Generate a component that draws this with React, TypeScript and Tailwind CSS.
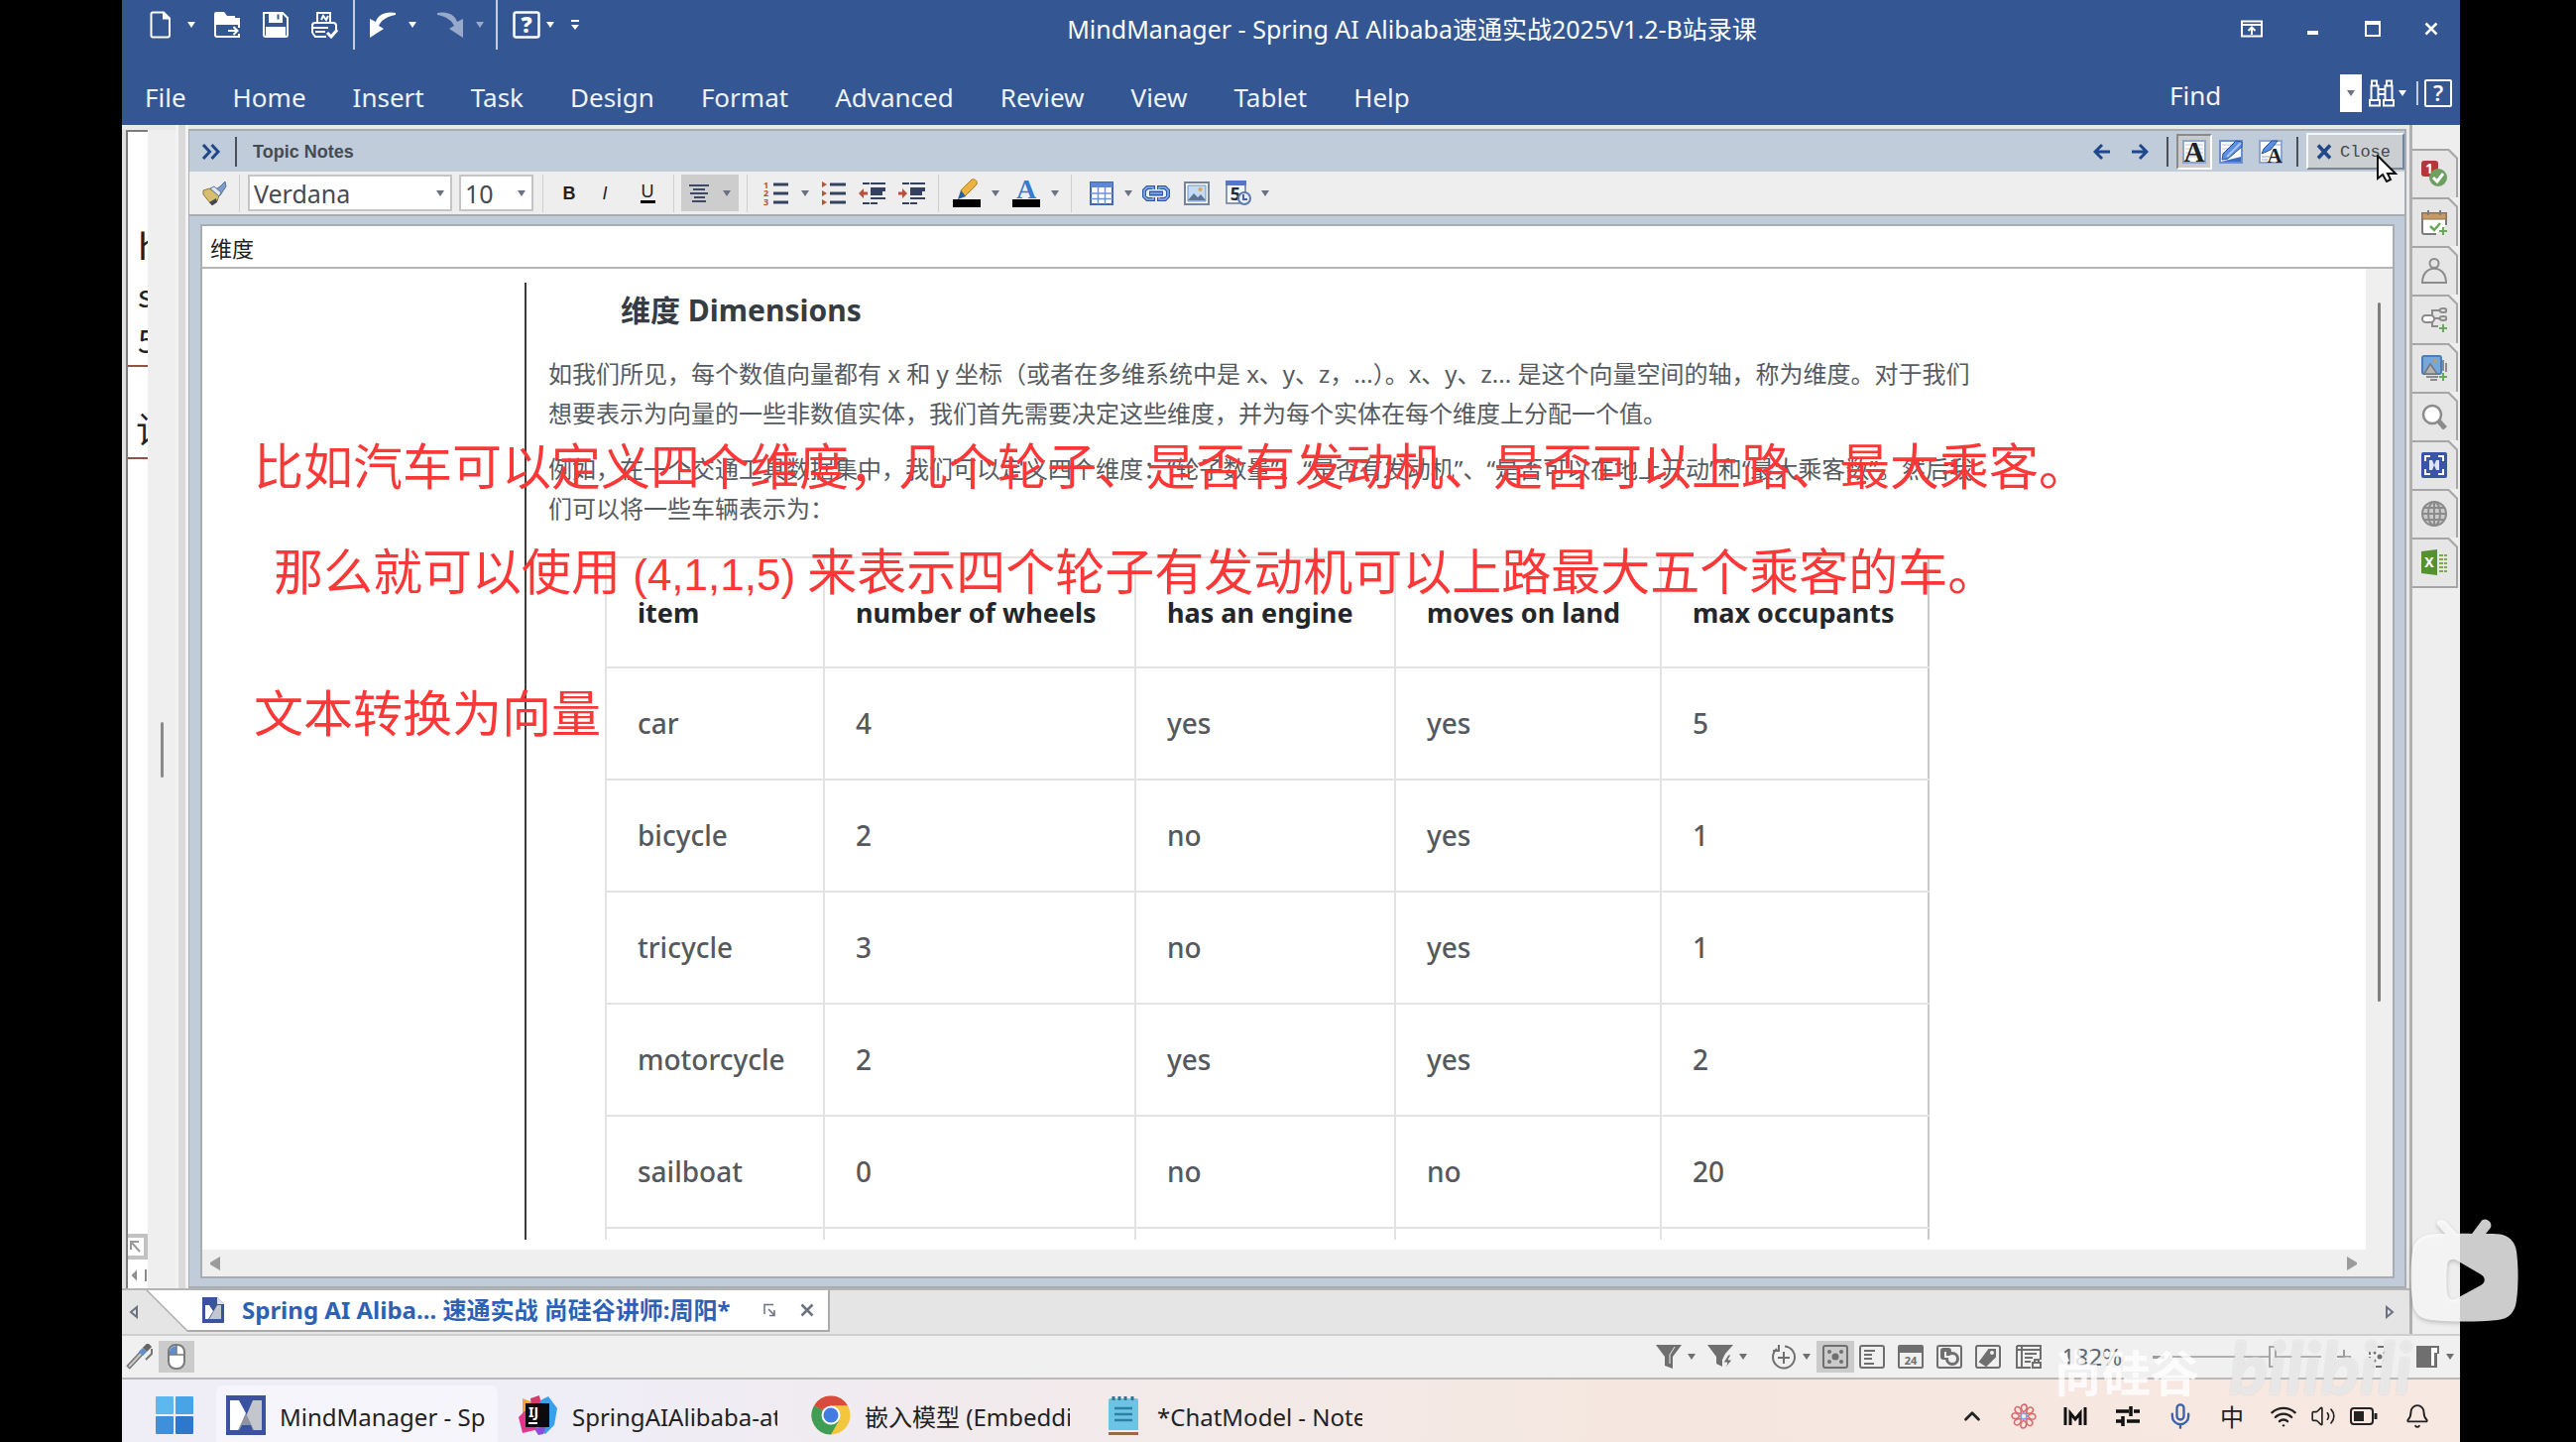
import type { ReactNode } from "react";
import {
  Bell,
  ChevronUp,
  Mic,
  Volume2,
  Wifi,
} from "lucide-react";

const ribbonTabs = [
  "File",
  "Home",
  "Insert",
  "Task",
  "Design",
  "Format",
  "Advanced",
  "Review",
  "View",
  "Tablet",
  "Help",
];

const vehicles = [
  ["car", "4", "yes", "yes", "5"],
  ["bicycle", "2", "no", "yes", "1"],
  ["tricycle", "3", "no", "yes", "1"],
  ["motorcycle", "2", "yes", "yes", "2"],
  ["sailboat", "0", "no", "no", "20"],
  ["", "", "", "", ""],
];

const Caret = ({ className = "" }: { className?: string }) => (
  <svg
    viewBox="0 0 8 6"
    fill="currentColor"
    className={`w-2 h-[6px] shrink-0 ${className}`}
  >
    <path d="M0 0h8L4 6z" />
  </svg>
);

const IconButton = ({
  label,
  className = "",
  children,
}: {
  label: string;
  className?: string;
  children: ReactNode;
}) => (
  <button
    type="button"
    aria-label={label}
    className={`flex items-center justify-center shrink-0 ${className}`}
  >
    {children}
  </button>
);

const QuickAccess = () => (
  <div className="flex items-center h-[50px] pl-7 text-white shrink-0">
    <IconButton label="New">
      <svg viewBox="0 0 22 28" fill="none" stroke="currentColor" strokeWidth="2" className="w-[22px] h-7">
        <path d="M3 1.500h11l6 6v17a2 2 0 0 1-2 2H3a1.500 1.500 0 0 1-1.500-1.500V3A1.500 1.500 0 0 1 3 1.500z" />
        <path d="M14 1.500v6h6" fill="currentColor" />
      </svg>
    </IconButton>
    <Caret className="ml-4" />
    <IconButton label="Open" className="ml-[18px]">
      <svg viewBox="0 0 28 28" className="w-7 h-7">
        <path d="M1 3a2 2 0 0 1 2-2h8l3 4h8v9H1z" fill="currentColor" />
        <path d="M2 12v12a2 2 0 0 0 2 2h22v-3M26 17V8" fill="none" stroke="currentColor" strokeWidth="2" />
        <path d="M13 7h14v7H13z" fill="currentColor" />
        <path d="M15 20h9M20.500 16l4 4-4 4" fill="none" stroke="currentColor" strokeWidth="2" />
      </svg>
    </IconButton>
    <IconButton label="Save" className="ml-[21px]">
      <svg viewBox="0 0 28 28" className="w-7 h-7" fill="none" stroke="currentColor" strokeWidth="2">
        <path d="M2 2h19l5 5v17a2 2 0 0 1-2 2H4a2 2 0 0 1-2-2z" />
        <path d="M8 2h12v9H8z" fill="currentColor" />
        <path d="M15.500 3.500h2v5h-2z" fill="#345793" stroke="none" />
        <path d="M5 17h18v8H5z" fill="currentColor" />
      </svg>
    </IconButton>
    <IconButton label="Print" className="ml-[21px]">
      <svg viewBox="0 0 28 28" className="w-7 h-7" fill="none" stroke="currentColor" strokeWidth="2">
        <path d="M7 12V2h13v10M11 9l2-4 3 4 2-4" />
        <path d="M4 12h19a3 3 0 0 1 3 3v4M2 22v-7a3 3 0 0 1 2-3M2 17h16M5 21h10M4 26h12M2 22l3 4" />
        <path d="M17 22l4 4 6-7" strokeWidth="3" />
      </svg>
    </IconButton>
    <span className="w-[2px] h-full ml-[15px] bg-[#c3cde0]" />
    <IconButton label="Undo" className="ml-[14px]">
      <svg viewBox="0 0 28 28" className="w-7 h-7" fill="currentColor">
        <path d="M27 2c-10-2-18 2-20 9L1 8v19l14-9-5-3c2-5 7-9 17-11z" />
      </svg>
    </IconButton>
    <Caret className="ml-3" />
    <IconButton label="Redo" className="ml-5 text-[#98aacb]">
      <svg viewBox="0 0 28 28" className="w-7 h-7" fill="currentColor">
        <path d="M1 2c10-2 18 2 20 9l6-3v19l-14-9 5-3C16 10 11 6 1 4z" />
      </svg>
    </IconButton>
    <Caret className="ml-3 text-[#98aacb]" />
    <span className="w-[2px] h-full ml-3 bg-[#c3cde0]" />
    <IconButton label="Help" className="ml-[15px]">
      <svg viewBox="0 0 28 28" className="w-7 h-7">
        <rect x="1.500" y="1.500" width="25" height="25" rx="2" strokeWidth="2.500" fill="none" stroke="currentColor" />
        <text x="14" y="22" textAnchor="middle" fontSize="22" fontWeight="900" fill="currentColor">?</text>
      </svg>
    </IconButton>
    <Caret className="ml-[6px]" />
    <IconButton label="Customize" className="ml-4">
      <svg viewBox="0 0 10 12" className="w-[10px] h-3" fill="currentColor">
        <path d="M1 1h8v2H1zM1 6h8l-4 5z" />
      </svg>
    </IconButton>
  </div>
);

const WindowButtons = () => (
  <div className="flex items-center h-[58px] text-white shrink-0">
    <IconButton label="Ribbon display" className="w-[60px]">
      <svg viewBox="0 0 22 18" className="w-[22px] h-[18px]" fill="none" stroke="currentColor" strokeWidth="2">
        <path d="M1 1.500h20v15H1zM1 5h20M11 15V8M7.500 11L11 7.500l3.500 3.500" />
      </svg>
    </IconButton>
    <IconButton label="Minimize" className="w-[62px] pt-2">
      <span className="w-[11px] h-1 bg-white" />
    </IconButton>
    <IconButton label="Maximize" className="w-[60px]">
      <span className="w-4 h-4 border-2 border-t-4 border-white" />
    </IconButton>
    <IconButton label="Close window" className="w-[58px]">
      <svg viewBox="0 0 14 14" className="w-[14px] h-[14px]" fill="none" stroke="currentColor" strokeWidth="2.500">
        <path d="M1.500 1.500l11 11M12.500 1.500l-11 11" />
      </svg>
    </IconButton>
  </div>
);

const Ribbon = () => (
  <header className="bg-[#345793] text-white shrink-0">
    <div className="flex h-14">
      <QuickAccess />
      <h1 className="flex-1 pl-[22px] text-center text-[25px] leading-[58px] whitespace-nowrap">
        MindManager - Spring AI Alibaba速通实战2025V1.2-B站录课
      </h1>
      <WindowButtons />
    </div>
    <div className="flex h-[70px] pt-[14px]">
      <nav className="flex items-center gap-[47px] h-14 pl-[23px]">
        {ribbonTabs.map((tab) => (
          <button key={tab} type="button" className="text-[26px] leading-9 text-[#eef2f9]">
            {tab}
          </button>
        ))}
      </nav>
      <div className="flex items-center h-12 ml-auto pr-2">
        <input
          aria-label="Find"
          placeholder="Find"
          className="w-[172px] text-[26px] leading-9 pt-1 outline-none placeholder:text-[#eef2f9] bg-transparent"
        />
        <label className="relative flex items-center justify-center w-[22px] h-[38px] bg-white text-gray-500">
          <select aria-label="Recent searches" className="absolute inset-0 appearance-none opacity-0" />
          <Caret />
        </label>
        <IconButton label="Search" className="ml-[7px]">
          <svg viewBox="0 0 26 28" className="w-[26px] h-7" fill="none" stroke="currentColor" strokeWidth="2">
            <path d="M3 1.500h5v5H3zM18 1.500h5v5h-5zM2.500 6.500h7V21h-7zM16.500 6.500h7V21h-7zM1 21h10v5.500H1zM15 21h10v5.500H15zM9.500 10h7v5h-7z" />
          </svg>
        </IconButton>
        <Caret className="ml-1" />
        <span className="w-[2px] h-6 ml-[10px] bg-[#c3cde0]" />
        <IconButton label="Help topics" className="ml-[6px]">
          <svg viewBox="0 0 28 28" className="w-7 h-7">
            <rect x="1" y="1" width="26" height="26" rx="1" strokeWidth="2" fill="none" stroke="currentColor" />
            <text x="14" y="22" textAnchor="middle" fontSize="22" fontWeight="600" fill="currentColor">?</text>
          </svg>
        </IconButton>
      </div>
    </div>
  </header>
);

const NotesHeader = () => (
  <div className="flex items-center h-[41px] bg-[#c0ccd9] text-[#1f478b] shrink-0">
    <IconButton label="Collapse" className="ml-3">
      <svg viewBox="0 0 20 16" className="w-5 h-4" fill="none" stroke="currentColor" strokeWidth="3">
        <path d="M2 1l6.500 7L2 15M10.500 1L17 8l-6.500 7" />
      </svg>
    </IconButton>
    <span className="w-[2px] h-[30px] ml-[14px] bg-[#4a5058]" />
    <h2 className="ml-4 pt-[2px] font-['Liberation_Sans',sans-serif] font-bold text-[18px] text-[#454b52]">
      Topic Notes
    </h2>
    <div className="flex items-center ml-auto">
      <IconButton label="Previous note">
        <svg viewBox="0 0 18 18" className="w-[18px] h-[18px]" fill="none" stroke="currentColor" strokeWidth="3">
          <path d="M17 9H2M9 2L2 9l7 7" />
        </svg>
      </IconButton>
      <IconButton label="Next note" className="ml-5">
        <svg viewBox="0 0 18 18" className="w-[18px] h-[18px]" fill="none" stroke="currentColor" strokeWidth="3">
          <path d="M1 9h15M9 2l7 7-7 7" />
        </svg>
      </IconButton>
      <span className="w-[2px] h-[30px] ml-[18px] bg-[#4a5058]" />
      <IconButton
        label="Text mode"
        className="ml-2 w-9 h-9 border-2 border-t-[#8a8a8a] border-l-[#8a8a8a] border-b-white border-r-white bg-[#c9cbcd]"
      >
        <svg viewBox="0 0 24 24" className="w-6 h-6 font-['Liberation_Serif',serif]">
          <path d="M1 1h22v22H1z" fill="#fff" stroke="#8fa5cf" strokeWidth="2" />
          <path d="M3 5h18M3 9h18M3 13h18M3 17h18" stroke="#b9c7e2" />
          <text x="12" y="22" textAnchor="middle" fontSize="29" fontWeight="700" fill="#1d2126">A</text>
        </svg>
      </IconButton>
      <IconButton label="Ink mode" className="ml-[7px]">
        <svg viewBox="0 0 24 24" className="w-6 h-6">
          <path d="M1 1h22v22H1z" fill="#fff" stroke="#6c8fce" strokeWidth="2" />
          <path d="M3 5h9M3 9h7M3 13h5" stroke="#b9c7e2" />
          <path d="M2 22L22 17v5z" fill="#3c6cc0" />
          <path d="M3 20L4 14 17 1l6 1v5L9 19z" fill="#5b8ede" stroke="#28529c" />
          <path d="M8 17L22 3" stroke="#a8c6f2" strokeWidth="2" />
        </svg>
      </IconButton>
      <IconButton label="Ink and text" className="ml-4">
        <svg viewBox="0 0 24 24" className="w-6 h-6 font-['Liberation_Serif',serif]">
          <path d="M1 1h22v22H1z" fill="#fff" stroke="#8fa5cf" strokeWidth="2" />
          <path d="M3 17h8M3 20h6M16 5h6" stroke="#8ea5cf" />
          <path d="M3 14L5 9l8-8h6l-7 9z" fill="#5b8ede" stroke="#28529c" />
          <text x="16" y="23" textAnchor="middle" fontSize="21" fontWeight="700" fill="#1d2126">A</text>
        </svg>
      </IconButton>
      <span className="w-[2px] h-[30px] ml-[14px] bg-[#4a5058]" />
      <div className="relative ml-2">
        <button
          type="button"
          className="flex items-center w-[99px] h-[37px] pl-2 border-2 border-t-[#f4f6f8] border-l-[#f4f6f8] border-b-[#7d8894] border-r-[#6f86a5] bg-[#cbcfd2]"
        >
          <svg viewBox="0 0 16 16" className="w-4 h-4" fill="none" stroke="currentColor" strokeWidth="3.500">
            <path d="M2 1.500l12 13M14 1.500l-12 13" />
          </svg>
          <span className="ml-2 pt-[2px] font-['Liberation_Mono',monospace] text-[17px] text-[#44494e]">
            Close
          </span>
        </button>
        <svg viewBox="0 0 22 28" className="absolute left-[71px] top-[22px] w-[22px] h-7">
          <path
            d="M1 1v23l5-4 4 7 4-2-3-6h8z"
            fill="#fff"
            stroke="#111"
            strokeWidth="2"
          />
        </svg>
      </div>
    </div>
  </div>
);

const Separator = ({ className = "" }: { className?: string }) => (
  <span className={`w-px h-[38px] shrink-0 bg-[#cfcfcf] ${className}`} />
);

const NotesToolbar = () => (
  <div className="flex items-center h-[45px] border-b-2 border-[#a9adb1] bg-[#eeeeee] text-gray-500 shrink-0">
    <IconButton label="Format painter" className="ml-3">
      <svg viewBox="0 0 26 26" className="w-[26px] h-[26px]">
        <path d="M24 1l1 5-6 9-6-5 6-4z" fill="#7f9cc9" stroke="#5a74a0" />
        <path d="M2 10l6-2 10 7-2 6-5 4-5-6-4-5z" fill="#d8be6c" stroke="#8d7a3f" />
        <path d="M9 8l4-2 7 6-2 4z" fill="#e3e8f0" stroke="#5a74a0" />
        <path d="M8 22l3 3 5-3-1-4z" fill="#3f4854" />
      </svg>
    </IconButton>
    <Separator className="ml-3" />
    <div className="relative flex items-center ml-2 text-gray-500">
      <select
        aria-label="Font"
        className="appearance-none w-[206px] h-[37px] pl-1 border-2 border-[#c3c5c7] bg-white text-[25px] leading-8 text-[#454b52]"
      >
        <option>Verdana</option>
      </select>
      <Caret className="absolute right-2" />
    </div>
    <div className="relative flex items-center ml-[7px]">
      <select
        aria-label="Font size"
        className="appearance-none w-[75px] h-[37px] pl-1 border-2 border-[#c3c5c7] bg-white text-[25px] leading-8 text-[#454b52]"
      >
        <option>10</option>
      </select>
      <Caret className="absolute right-2" />
    </div>
    <Separator className="ml-[9px]" />
    <div className="flex items-center ml-2 font-['Liberation_Sans',sans-serif] text-[18px] leading-5 text-[#222]">
      <button type="button" className="w-9 font-black">B</button>
      <button type="button" className="w-9 italic">I</button>
      <button type="button" className="w-[50px] flex justify-center">
        <span className="border-b-[3px] border-black leading-[18px] px-px">U</span>
      </button>
    </div>
    <Separator className="ml-[1px]" />
    <IconButton label="Alignment" className="ml-[7px] w-[58px] h-[37px] gap-[14px] bg-[#cdcdcd]">
      <svg viewBox="0 0 20 18" className="w-5 h-[18px]" stroke="#3b4a68" strokeWidth="2">
        <path d="M0 1h20M4 5h12M1 9h18M5 13h11M3 17h14" />
      </svg>
      <Caret />
    </IconButton>
    <Separator className="ml-2" />
    <IconButton label="Numbered list" className="ml-4">
      <svg viewBox="0 0 26 24" className="w-[26px] h-6">
        <path d="M10 3h15M10 12h15M10 21h15" stroke="#34425f" strokeWidth="3" />
        <g fontSize="9" fontWeight="700" fill="#b5533a">
          <text x="0" y="7">1</text>
          <text x="0" y="15">2</text>
          <text x="0" y="24">3</text>
        </g>
      </svg>
    </IconButton>
    <Caret className="ml-3" />
    <IconButton label="Bulleted list" className="ml-3">
      <svg viewBox="0 0 26 24" className="w-[26px] h-6" fill="none">
        <path d="M9 3h16M9 12h16M9 21h16" stroke="#34425f" strokeWidth="3" />
        <path d="M1 0l5 3-5 3zM1 9l5 3-5 3zM1 18l5 3-5 3z" fill="#b5533a" />
      </svg>
    </IconButton>
    <IconButton label="Decrease indent" className="ml-3">
      <svg viewBox="0 0 28 24" className="w-7 h-6" fill="none">
        <path d="M4 2h7M12 2h15M4 22h7M12 22h7M12 17h15" stroke="#34425f" strokeWidth="2" />
        <path d="M12 8h15M12 12h12" stroke="#34425f" strokeWidth="4" />
        <path d="M0 12l5-5v3.500h4v3H5V17z" fill="#b5533a" />
      </svg>
    </IconButton>
    <IconButton label="Increase indent" className="ml-3">
      <svg viewBox="0 0 28 24" className="w-7 h-6" fill="none">
        <path d="M4 2h7M12 2h15M4 22h7M12 22h7M12 17h15" stroke="#34425f" strokeWidth="2" />
        <path d="M12 8h15M12 12h12" stroke="#34425f" strokeWidth="4" />
        <path d="M9 12L4 7v3.500H0v3h4V17z" fill="#b5533a" />
      </svg>
    </IconButton>
    <Separator className="ml-3" />
    <IconButton label="Highlight color" className="ml-[13px]">
      <svg viewBox="0 0 30 30" className="w-[30px] h-[30px]">
        <path d="M9 12L20 1c4-1 6 2 5 5L13 18z" fill="#ecb344" stroke="#b17d1c" />
        <path d="M9 12l5 6-8 3z" fill="#2d5d9b" />
        <path d="M1 21h28v8H1z" fill="#000" />
      </svg>
    </IconButton>
    <Caret className="ml-[10px]" />
    <IconButton label="Font color" className="ml-3">
      <svg viewBox="0 0 30 30" className="w-[30px] h-[30px] font-['Liberation_Serif',serif]">
        <text x="15" y="20" textAnchor="middle" fontSize="28" fontWeight="700" fill="#3a7bd0">A</text>
        <path d="M1 21h28v8H1z" fill="#000" />
      </svg>
    </IconButton>
    <Caret className="ml-[10px]" />
    <Separator className="ml-3" />
    <IconButton label="Insert table" className="ml-[18px]">
      <svg viewBox="0 0 24 24" className="w-6 h-6">
        <path d="M1 1h22v22H1z" fill="#fff" stroke="#3f67b4" strokeWidth="2" />
        <path d="M1 1h22v5H1z" fill="#5d88cf" />
        <path d="M1 12h22M1 17.500h22M8.500 6v17M15.500 6v17" stroke="#6f94d4" strokeWidth="1.500" />
      </svg>
    </IconButton>
    <Caret className="ml-[11px]" />
    <IconButton label="Insert link" className="ml-[10px]">
      <svg viewBox="0 0 28 18" className="w-7 h-[18px]" fill="none">
        <path d="M11 5V3H5L2 6v6l3 3h6v-2M17 5V3h6l3 3v6l-3 3h-6v-2" stroke="#2f5aab" strokeWidth="4" />
        <path d="M7 9h14" stroke="#2f5aab" strokeWidth="5" />
        <path d="M8 9h12M11 5V3H5L2 6v6l3 3h6v-2M17 5V3h6l3 3v6l-3 3h-6v-2" stroke="#8fb3ee" strokeWidth="1.500" />
      </svg>
    </IconButton>
    <IconButton label="Insert picture" className="ml-[14px]">
      <svg viewBox="0 0 26 24" className="w-[26px] h-6">
        <path d="M1 1h24v22H1z" fill="#fff" stroke="#76849a" strokeWidth="2" />
        <path d="M4 4h18v16H4z" fill="#c4dbf3" stroke="#6e94c8" />
        <path d="M4 19l6-7 4 4 3-3 5 6z" fill="#5d7595" />
        <circle cx="16.500" cy="8" r="2" fill="#e8a44c" />
      </svg>
    </IconButton>
    <IconButton label="Insert date" className="ml-4">
      <svg viewBox="0 0 26 26" className="w-[26px] h-[26px]">
        <path d="M1 1h19v22H1z" fill="#f3f6fb" stroke="#6a7a94" strokeWidth="1.500" />
        <path d="M0 0h21v5H0z" fill="#5578c2" />
        <text x="10" y="20" textAnchor="middle" fontSize="18" fontWeight="700" fill="#222b38">5</text>
        <circle cx="19" cy="18" r="6" fill="#e5ecf7" stroke="#5e79ab" strokeWidth="2" />
        <path d="M18 14v5h4" fill="none" stroke="#4b659a" strokeWidth="2" />
      </svg>
    </IconButton>
    <Caret className="ml-[10px]" />
  </div>
);

const NoteDocument = () => (
  <div className="flex-1 min-w-0 min-h-0 flex flex-col pt-[14px] pb-[10px] pl-[325px]">
    <article className="flex-1 min-h-0 overflow-hidden border-l-2 border-[#3c3c3c] pl-[22px] text-[#555b61]">
      <h3 className="mt-2 ml-[73px] text-[30px] leading-[40px] font-bold text-[#363c43]">
        维度 Dimensions
      </h3>
      <p className="mt-6 text-[24px] leading-[40px] whitespace-nowrap">
        如我们所见，每个数值向量都有 x 和 y 坐标（或者在多维系统中是 x、y、z，...）。x、y、z... 是这个向量空间的轴，称为维度。对于我们
        <br />
        想要表示为向量的一些非数值实体，我们首先需要决定这些维度，并为每个实体在每个维度上分配一个值。
      </p>
      <p className="mt-4 text-[24px] leading-[40px] whitespace-nowrap">
        例如，在一个交通工具数据集中，我们可以定义四个维度：“轮子数量”、“是否有发动机”、“是否可以在地上开动”和“最大乘客数”。然后我
        <br />
        们可以将一些车辆表示为：
      </p>
      <table className="mt-7 ml-[57px] w-[1334px] table-fixed border-collapse text-left text-[28px] leading-9 text-[#55585c]">
        <colgroup>
          <col className="w-[220px]" />
          <col className="w-[314px]" />
          <col className="w-[262px]" />
          <col className="w-[268px]" />
          <col className="w-[270px]" />
        </colgroup>
        <thead>
          <tr className="h-[111px] text-[#23272c] text-[27px]">
            <th className="pl-[31px] border-2 border-[#e3e3e3] font-bold">item</th>
            <th className="pl-[31px] border-2 border-[#e3e3e3] font-bold">number of wheels</th>
            <th className="pl-[31px] border-2 border-[#e3e3e3] font-bold">has an engine</th>
            <th className="pl-[31px] border-2 border-[#e3e3e3] font-bold">moves on land</th>
            <th className="pl-[31px] border-2 border-[#e3e3e3] border-r-[#c9c9c9] font-bold">max occupants</th>
          </tr>
        </thead>
        <tbody>
          {vehicles.map((row, i) => (
            <tr key={i} className="h-[113px]">
              {row.map((cell, j) => (
                <td
                  key={j}
                  className="pl-[31px] pb-[2px] border-2 border-[#e3e3e3] last:border-r-[#c9c9c9] font-medium"
                >
                  {cell}
                </td>
              ))}
            </tr>
          ))}
        </tbody>
      </table>
    </article>
  </div>
);

/* red captions written over the note */
const Annotations = () => (
  <div className="font-['Noto_Sans_CJK_SC',sans-serif] text-[50px] leading-[60px] text-[#fb3838] whitespace-nowrap">
    <p className="absolute left-[52px] top-[166px]">
      比如汽车可以定义四个维度，几个轮子、是否有发动机、是否可以上路、最大乘客。
    </p>
    <p className="absolute left-[72px] top-[272px]">
      那么就可以使用
      <span className="font-['Liberation_Sans',sans-serif] text-[44px]"> (4,1,1,5) </span>
      来表示四个轮子有发动机可以上路最大五个乘客的车。
    </p>
    <p className="absolute left-[52px] top-[415px]">文本转换为向量</p>
  </div>
);

const TopicNotes = () => (
  <section className="flex-1 min-w-0 min-h-0 flex flex-col mt-1 border-2 border-l border-[#a9adb1] bg-[#c0ccd9]">
    <NotesHeader />
    <NotesToolbar />
    <div className="flex-1 min-h-0 flex flex-col pl-[11px] pr-[10px] pt-2 pb-2">
      <div className="flex-1 min-h-0 flex flex-col border-2 border-[#a9adb1] bg-white">
        <div className="h-[43px] pl-2 border-b-2 border-[#b5b5b5] font-['Noto_Sans_CJK_SC',sans-serif] text-[22px] leading-[43px] text-[#222] shrink-0">
          维度
        </div>
        <div className="relative flex-1 min-h-0 flex">
          <NoteDocument />
          <div className="w-[27px] flex justify-center pt-[34px] bg-[#efefef]">
            <div className="w-[3px] h-[705px] rounded bg-[#7f7f7f]" />
          </div>
          <Annotations />
        </div>
        <div className="flex items-center justify-between h-[27px] pl-2 pr-9 bg-[#efefef] text-[#9b9b9b] shrink-0">
          <svg viewBox="0 0 10 14" className="w-[10px] h-[14px]" fill="currentColor">
            <path d="M10 0v14L0 8V6z" />
          </svg>
          <svg viewBox="0 0 10 14" className="w-[10px] h-[14px]" fill="currentColor">
            <path d="M0 0v14l10-6V6z" />
          </svg>
        </div>
      </div>
    </div>
  </section>
);

const MapCanvas = () => (
  <div className="flex w-[54px] mt-[5px] shrink-0 border-l-4 border-[#e0e0e0]">
    <div className="flex flex-col w-[22px] overflow-hidden border-t-2 border-l-2 border-[#7d7d7d] bg-white font-['Noto_Sans_CJK_SC',sans-serif] text-[#222] whitespace-nowrap">
      <p className="mt-[88px] pl-[10px] text-[36px] leading-[50px]">h</p>
      <p className="pl-[10px] text-[32px] leading-[50px]">s</p>
      <p className="pl-[10px] text-[32px] leading-[42px]">5</p>
      <div className="h-[2px] mt-[5px] bg-[#8f5343] shrink-0" />
      <p className="mt-[34px] pl-[8px] text-[36px] leading-[54px]">让</p>
      <div className="h-[2px] mt-[3px] bg-[#8f5343] shrink-0" />
      <div className="mt-auto mb-[6px] -ml-1 w-6 shrink-0">
        <div className="w-6 h-[26px] border-4 border-[#c2c2c2] bg-white">
          <svg viewBox="0 0 16 18" className="w-4 h-[18px]" fill="none" stroke="#9a9a9a" strokeWidth="2">
            <path d="M3 12V4h8M3 4l9 10" />
          </svg>
        </div>
        <svg viewBox="0 0 24 14" className="w-6 h-[14px] mt-[9px]" fill="none" stroke="#8a8a8a" strokeWidth="2">
          <path d="M12 4v6l-3-3zM22 1v12" />
        </svg>
      </div>
    </div>
    <div className="flex-1 flex flex-col items-center pt-[597px] bg-[#efefef]">
      <div className="w-[3px] h-[56px] rounded bg-[#8a8a8a]" />
    </div>
  </div>
);

const DocumentTabs = () => (
  <div className="relative flex h-[46px] border-t-2 border-[#b4b4b4] bg-[#e5e5e5] shrink-0">
    <IconButton label="Scroll tabs left" className="w-6 text-gray-500">
      <svg viewBox="0 0 10 14" className="w-[10px] h-[14px]" fill="none" stroke="currentColor" strokeWidth="2">
        <path d="M8 2v10L2 7z" />
      </svg>
    </IconButton>
    <div className="h-[42px] bg-[#ababab] [clip-path:polygon(0_0,100%_0,100%_100%,42px_100%)]">
      <div className="flex items-center h-10 w-[686px] ml-[2px] mr-[2px] pl-[54px] bg-white [clip-path:polygon(0_0,100%_0,100%_100%,40px_100%)]">
        <svg viewBox="0 0 24 28" className="w-6 h-7 shrink-0">
          <path d="M1 1h15l7 7v18a1 1 0 0 1-1 1H1z" fill="#3a52a0" />
          <path d="M16 1v7h7z" fill="#dfe4f2" />
          <path d="M4 9h4l4 6-5 8H4z" fill="#fff" />
          <path d="M20 9h-4l-8 14h12z" fill="#c3c6cc" />
        </svg>
        <button type="button" className="ml-[17px] text-[24px] leading-8 font-bold text-[#2c62b5] whitespace-nowrap">
          Spring AI Aliba... 速通实战 尚硅谷讲师:周阳*
        </button>
        <div className="flex items-center gap-6 ml-auto pr-[14px] text-gray-500">
          <IconButton label="Pop out">
            <svg viewBox="0 0 14 14" className="w-[14px] h-[14px]" fill="none" stroke="currentColor" strokeWidth="1.500">
              <path d="M2 11V1.500h9M6 6l6 6M12 7v5.500H7" />
            </svg>
          </IconButton>
          <IconButton label="Close document">
            <svg viewBox="0 0 14 14" className="w-[14px] h-[14px]" fill="none" stroke="currentColor" strokeWidth="2.500">
              <path d="M1.500 1.500l11 11M12.500 1.500l-11 11" />
            </svg>
          </IconButton>
        </div>
      </div>
    </div>
    <IconButton label="Scroll tabs right" className="ml-auto w-10 text-gray-500">
      <svg viewBox="0 0 10 14" className="w-[10px] h-[14px]" fill="none" stroke="currentColor" strokeWidth="2">
        <path d="M2 2v10l6-5z" />
      </svg>
    </IconButton>
  </div>
);

const taskPaneIcons: { label: string; icon: ReactNode }[] = [
  {
    label: "Markers",
    icon: (
      <>
        <rect x="0" y="0" width="17" height="16" rx="3" fill="#b3373b" />
        <text x="8" y="13" textAnchor="middle" fontSize="14" fontWeight="700" fill="#fff">1</text>
        <circle cx="17" cy="17" r="9" fill="#6f9f63" />
        <path d="M12 17l4 4 6-8" stroke="#fff" strokeWidth="3" />
      </>
    ),
  },
  {
    label: "Task info",
    icon: (
      <>
        <path d="M15 25H3a2 2 0 0 1-2-2V4h24v12" fill="#fff" stroke="#7c7c7c" strokeWidth="2" />
        <path d="M1 4h24v6H1z" fill="#c99a66" stroke="#8d7355" />
        <path d="M7 1v5M19 1v5" stroke="#7c7c7c" strokeWidth="2" />
        <path d="M9 17l4 4 6-7" stroke="#69a95b" strokeWidth="2.500" />
        <path d="M22 18v8M18 22h8" stroke="#69a95b" strokeWidth="2" />
      </>
    ),
  },
  {
    label: "Resources",
    icon: (
      <>
        <circle cx="13" cy="5.500" r="4.500" stroke="#8b8b8b" strokeWidth="2" />
        <path d="M1 25c0-19 24-19 24 0z" stroke="#8b8b8b" strokeWidth="2" />
      </>
    ),
  },
  {
    label: "Map parts",
    icon: (
      <>
        <rect x="1" y="9" width="12" height="7" rx="3.500" fill="#fff" stroke="#8b8b8b" strokeWidth="2" />
        <path d="M11 10V4h8M13 12h6M11 16v4h6" stroke="#8b8b8b" strokeWidth="2" />
        <ellipse cx="22" cy="4" rx="3.500" ry="2" stroke="#8b8b8b" strokeWidth="2" />
        <ellipse cx="22" cy="12" rx="3.500" ry="2" stroke="#8b8b8b" strokeWidth="2" />
        <path d="M22 18v8M18 22h8" stroke="#69a95b" strokeWidth="2" />
      </>
    ),
  },
  {
    label: "Library",
    icon: (
      <>
        <rect x="1" y="1" width="19" height="18" rx="2" fill="#74a7dc" stroke="#4c7db4" strokeWidth="2" />
        <path d="M3 19l6-10 7 10z" fill="#b4b4b4" stroke="#777" strokeWidth="1.500" />
        <circle cx="14" cy="6" r="2" fill="#b8a061" />
        <path d="M22 5v11M25 8v9M5 22h12M9 25h7" stroke="#8b8b8b" strokeWidth="2" />
        <path d="M22 18v8M18 22h8" stroke="#69a95b" strokeWidth="2" />
      </>
    ),
  },
  {
    label: "Search",
    icon: (
      <>
        <circle cx="11" cy="11" r="9" fill="#fff" stroke="#8b8b8b" strokeWidth="2.500" />
        <path d="M17 17l7 8" stroke="#8b8b8b" strokeWidth="5" />
      </>
    ),
  },
  {
    label: "Snap",
    icon: (
      <>
        <rect x="0" y="0" width="26" height="26" rx="2" fill="#3a55a8" />
        <path d="M4 9V4h5M17 4h5v5M22 17v5h-5M9 22H4v-5" stroke="#fff" strokeWidth="2" />
        <path d="M8 8h10v10H8z" fill="#dfe5f4" />
        <path d="M11 8l2 5 2-5M11 18l2-5 2 5" fill="#3a55a8" />
      </>
    ),
  },
  {
    label: "Browser",
    icon: (
      <>
        <circle cx="13" cy="13" r="12" fill="#c9c9c9" stroke="#8b8b8b" strokeWidth="2" />
        <ellipse cx="13" cy="13" rx="6" ry="12" stroke="#8b8b8b" strokeWidth="2" />
        <path d="M13 1v24M1 13h24M3 7h20M3 19h20" stroke="#8b8b8b" strokeWidth="2" />
      </>
    ),
  },
  {
    label: "Excel",
    icon: (
      <>
        <path d="M0 2l16-2v26L0 24z" fill="#55922f" />
        <text x="8" y="18" textAnchor="middle" fontSize="14" fontWeight="700" fill="#fff">X</text>
        <path d="M18 6h8M18 10h8M18 14h8M18 18h8M18 22h8" stroke="#7fa94a" strokeWidth="2" strokeDasharray="4 1" />
      </>
    ),
  },
];

const TaskPanes = () => (
  <aside className="w-12 pt-6 shrink-0 bg-[#eeeeee]">
    {taskPaneIcons.map(({ label, icon }) => (
      <button
        key={label}
        type="button"
        aria-label={label}
        className="block w-[46px] h-[49px] pr-[2px] pt-[2px] bg-[#a6a6a6] [clip-path:polygon(0_0,37px_0,100%_9px,100%_100%,0_100%)]"
      >
        <span className="flex items-center justify-center w-full h-full pb-[2px] bg-[#e6e6e6] [clip-path:polygon(0_0,36px_0,100%_8px,100%_100%,0_100%)]">
          <svg viewBox="0 0 26 26" fill="none" className="w-[26px] h-[26px]">
            {icon}
          </svg>
        </span>
      </button>
    ))}
    <div className="w-[46px] h-[2px] bg-[#a6a6a6]" />
  </aside>
);

const StatusBar = () => (
  <div className="flex items-center h-[46px] border-t-2 border-b-2 border-t-[#cfcfcf] border-b-[#b9b9b9] bg-[#f0f0f0] text-[#6f6f6f] shrink-0">
    <IconButton label="Pen" className="ml-1">
      <svg viewBox="0 0 28 26" className="w-7 h-[26px]" fill="none">
        <path d="M2 24L17 8" stroke="#777" strokeWidth="5" />
        <path d="M3 23L17 8" stroke="#c9c9c9" strokeWidth="2" />
        <path d="M15 10l4-4" stroke="#5d8fd0" strokeWidth="6" />
        <path d="M19 6l5-5" stroke="#666" strokeWidth="6" />
        <path d="M20 16l6-6V5" stroke="#777" strokeWidth="2" />
      </svg>
    </IconButton>
    <IconButton label="Select mode" className="ml-[5px] w-9 h-8 bg-[#cbcbcb]">
      <svg viewBox="0 0 18 26" className="w-[18px] h-[26px]">
        <rect x="1" y="1" width="16" height="24" rx="7" fill="#fff" stroke="#7b7b7b" strokeWidth="2" />
        <path d="M9 2v9H2V8c0-3 3-6 7-6z" fill="#5d8fd0" />
        <path d="M9 1v10M1 11h16" stroke="#7b7b7b" strokeWidth="1.500" />
      </svg>
    </IconButton>
    <div className="flex items-center ml-auto pr-[6px]">
      <IconButton label="Filter">
        <svg viewBox="0 0 26 24" className="w-[26px] h-6" fill="currentColor">
          <path d="M0 0h26l-9 12v12l-8-3v-9z" />
          <path d="M19 2l-5 8v9" stroke="#f0f0f0" fill="none" />
        </svg>
      </IconButton>
      <Caret className="ml-[6px]" />
      <IconButton label="Power filter" className="ml-3">
        <svg viewBox="0 0 26 24" className="w-[26px] h-6" fill="currentColor">
          <path d="M0 0h26l-8 9-3 6v7l-6-3v-7z" />
          <path d="M21 10l-5 8h4l-2 6 7-9h-4l3-5z" stroke="#f0f0f0" />
        </svg>
      </IconButton>
      <Caret className="ml-[6px]" />
      <IconButton label="Show detail" className="ml-6">
        <svg viewBox="0 0 26 26" className="w-[26px] h-[26px]" fill="none" stroke="currentColor" strokeWidth="2">
          <path d="M6 5a11 11 0 1 0 8-2.500M8 1v6H2M13 8v12M7 14h12" />
        </svg>
      </IconButton>
      <Caret className="ml-[6px]" />
      <IconButton label="Map view" className="ml-[6px] w-[38px] h-8 bg-[#cbcbcb]">
        <svg viewBox="0 0 26 24" className="w-[26px] h-6" fill="currentColor">
          <rect x="1" y="1" width="24" height="22" rx="2" fill="none" stroke="currentColor" strokeWidth="2" />
          <circle cx="13" cy="12" r="3.500" />
          <circle cx="7" cy="7" r="2" />
          <circle cx="19" cy="7" r="2" />
          <circle cx="7" cy="17" r="2" />
          <circle cx="19" cy="17" r="2" />
        </svg>
      </IconButton>
      <IconButton label="Outline view" className="ml-[5px]">
        <svg viewBox="0 0 26 24" className="w-[26px] h-6" fill="none" stroke="currentColor" strokeWidth="2">
          <rect x="1" y="1" width="24" height="22" rx="2" />
          <path d="M5 6h11M5 10h8M5 14h8M5 19h10" />
        </svg>
      </IconButton>
      <IconButton label="Schedule view" className="ml-[13px]">
        <svg viewBox="0 0 26 24" className="w-[26px] h-6" fill="none">
          <rect x="1" y="1" width="24" height="22" rx="1" stroke="currentColor" strokeWidth="2" />
          <path d="M1 1h24v7H1z" fill="currentColor" />
          <text x="13" y="20" textAnchor="middle" fontSize="11" fontWeight="700" fill="currentColor">24</text>
        </svg>
      </IconButton>
      <IconButton label="Icon view" className="ml-[13px]">
        <svg viewBox="0 0 26 24" className="w-[26px] h-6" fill="none" stroke="currentColor" strokeWidth="2">
          <rect x="1" y="1" width="24" height="22" rx="2" />
          <rect x="5" y="4" width="9" height="10" rx="2" fill="currentColor" />
          <circle cx="16" cy="14" r="5.500" fill="#f0f0f0" strokeWidth="3" />
          <path d="M9 7v5h6" stroke="#f0f0f0" />
        </svg>
      </IconButton>
      <IconButton label="Tag view" className="ml-[13px]">
        <svg viewBox="0 0 26 24" className="w-[26px] h-6" fill="none" stroke="currentColor" strokeWidth="2">
          <rect x="1" y="1" width="24" height="22" rx="2" />
          <path d="M5 17l9-12h6v7l-9 9z" fill="currentColor" />
          <circle cx="17" cy="8" r="1" fill="#f0f0f0" stroke="#f0f0f0" />
        </svg>
      </IconButton>
      <IconButton label="Gantt view" className="ml-[15px]">
        <svg viewBox="0 0 26 24" className="w-[26px] h-6" fill="none" stroke="currentColor" strokeWidth="2">
          <path d="M1 1h24v14M1 1v22h14M6 1v22M1 5h24M9 9h12M9 13h8M9 17h6" />
          <path d="M17 18h8v5h-8zM19 18v-3h4v3" />
        </svg>
      </IconButton>
      <span className="ml-5 w-[64px] text-[24px] leading-8 text-[#60676f]">182%</span>
      <IconButton label="Zoom out" className="ml-7">
        <span className="w-3 h-[3px] bg-[#9c9c9c]" />
      </IconButton>
      <input
        type="range"
        aria-label="Zoom"
        defaultValue={68}
        className="ml-2 w-[150px] h-6 appearance-none bg-transparent [&::-webkit-slider-runnable-track]:h-[2px] [&::-webkit-slider-runnable-track]:bg-[#b0b0b0] [&::-webkit-slider-thumb]:appearance-none [&::-webkit-slider-thumb]:w-2 [&::-webkit-slider-thumb]:h-[22px] [&::-webkit-slider-thumb]:-mt-[10px] [&::-webkit-slider-thumb]:border-2 [&::-webkit-slider-thumb]:border-[#a5a5a5] [&::-webkit-slider-thumb]:bg-[#f0f0f0]"
      />
      <IconButton label="Zoom in" className="ml-4">
        <svg viewBox="0 0 14 14" className="w-[14px] h-[14px]" stroke="#9c9c9c" strokeWidth="2">
          <path d="M0 7h14M7 0v14" />
        </svg>
      </IconButton>
      <IconButton label="Fit map" className="ml-[18px]">
        <svg viewBox="0 0 22 22" className="w-[22px] h-[22px]" fill="currentColor">
          <path d="M1 1h20v20H1z" fill="none" stroke="currentColor" strokeWidth="2" strokeDasharray="6 2" />
          <circle cx="11" cy="11" r="2.500" />
          <circle cx="6" cy="7" r="1.500" />
          <circle cx="16" cy="7" r="1.500" />
          <circle cx="6" cy="15" r="1.500" />
          <circle cx="16" cy="15" r="1.500" />
        </svg>
      </IconButton>
      <IconButton label="Task panes" className="ml-[26px]">
        <svg viewBox="0 0 24 22" className="w-6 h-[22px]">
          <path d="M0 0h23v8h-2v14H0z" fill="currentColor" />
          <path d="M15 2h6v5h-3v13h-3z" fill="#fff" />
        </svg>
      </IconButton>
      <Caret className="ml-[6px]" />
    </div>
  </div>
);

const runningApps: { title: string; active?: boolean; icon: ReactNode }[] = [
  {
    title: "MindManager - Spring AI",
    active: true,
    icon: (
      <>
        <path d="M0 0h40v40H0z" fill="#3a52a0" />
        <path d="M4 5h9l7 13-7 17H4z" fill="#fff" />
        <path d="M36 5h-9L14 35h22z" fill="#c3c6cc" />
        <path d="M20 18l8 17H12z" fill="#8d93a3" />
        <path d="M16 30h9l3 8H12z" fill="#3a52a0" />
      </>
    ),
  },
  {
    title: "SpringAIAlibaba-atguigu",
    icon: (
      <>
        <path d="M4 3l10 4 4 16-14 6z" fill="#f9a03c" />
        <path d="M12 3l9-3 2 10-10 2z" fill="#d63a6a" />
        <path d="M0 22l8-8 12 20-16 4z" fill="#e0378c" />
        <path d="M22 5l8-4 9 12-3 17-9 9-10-6z" fill="#3aa0e8" />
        <path d="M16 34l12-4-3 9-5 1z" fill="#8a4fd8" />
        <path d="M7 8h24v24H7z" fill="#0b0b0d" />
        <text x="10" y="22" fontSize="14" fontWeight="700" fill="#fff">IJ</text>
        <path d="M10 27h9v2h-9z" fill="#fff" />
      </>
    ),
  },
  {
    title: "嵌入模型 (Embedding)",
    icon: (
      <>
        <circle cx="20" cy="20" r="19.500" fill="#f4c63d" />
        <path d="M20 20L3.100 10.200A19.500 19.500 0 0 1 36.900 10.200H20z" fill="#d94b3d" />
        <path d="M3.100 10.200A19.500 19.500 0 0 0 20 39.500L28.500 24.800 20 20z" fill="#3f9d55" />
        <circle cx="20" cy="20" r="9.500" fill="#fff" />
        <circle cx="20" cy="20" r="7.500" fill="#3f7de0" />
      </>
    ),
  },
  {
    title: "*ChatModel - Notepad",
    icon: (
      <>
        <rect x="5" y="3" width="30" height="33" rx="2" fill="#6cc4e4" />
        <path d="M5 36h30v4H5z" fill="#9a6a48" />
        <path d="M5 35h30v2H5z" fill="#e9eef2" />
        <path d="M10 1v4M16 1v4M22 1v4M29 1v4" stroke="#3a6f8d" strokeWidth="3" />
        <path d="M11 13h18M11 19h18M11 25h18" stroke="#2f7f9f" strokeWidth="2.500" />
      </>
    ),
  },
];

const Taskbar = () => (
  <footer className="flex h-[63px] pt-[6px] shrink-0 bg-linear-to-r from-[#efedf6] via-[#f5e7df] to-[#f7e8e2] from-20% via-65% text-[#222]">
    <IconButton label="Start" className="ml-[34px] w-[38px] pt-[3px]">
      <svg viewBox="0 0 38 38" className="w-[38px] h-[38px]">
        <rect width="18" height="18" rx="1" fill="#5bb9f0" />
        <rect x="20" width="18" height="18" rx="1" fill="#4aa3e4" />
        <rect y="20" width="18" height="18" rx="1" fill="#3f90dc" />
        <rect x="20" y="20" width="18" height="18" rx="1" fill="#2d78cc" />
      </svg>
    </IconButton>
    <div className="flex gap-[11px] ml-[23px]">
      {runningApps.map(({ title, active, icon }) => (
        <button
          key={title}
          type="button"
          className={`flex items-center w-[284px] pl-[10px] pt-[3px] rounded-t-lg ${active ? "bg-[#f7f5fc]" : ""}`}
        >
          <svg viewBox="0 0 40 40" className="w-10 h-10 shrink-0">
            {icon}
          </svg>
          <span className="ml-[14px] w-[207px] overflow-hidden text-left text-[24px] leading-9 whitespace-nowrap pt-1">
            {title}
          </span>
        </button>
      ))}
    </div>
    <div className="flex items-center ml-auto pr-4 pt-[5px]">
      <IconButton label="Show hidden icons" className="w-[52px]">
        <ChevronUp size={26} strokeWidth={2.5} />
      </IconButton>
      <IconButton label="Assistant" className="w-[52px]">
        <svg viewBox="0 0 26 26" className="w-[26px] h-[26px]" fill="none" stroke="#d8696d" strokeWidth="1.500">
          {[0, 45, 90, 135, 180, 225, 270, 315].map((deg) => (
            <path key={deg} d="M13 9c-4-3-3-8 1-8 3 1 3 5-1 8z" transform={`rotate(${deg} 13 13)`} />
          ))}
          <circle cx="13" cy="13" r="3" stroke="#7f9be0" />
        </svg>
      </IconButton>
      <IconButton label="MindManager tray" className="w-[52px]">
        <svg viewBox="0 0 24 20" className="w-6 h-5" fill="none" stroke="#111" strokeWidth="3">
          <path d="M2 1v18M22 1v18M7 19V7l5 6 5-6v12" />
        </svg>
      </IconButton>
      <IconButton label="Mixer" className="w-[54px]">
        <svg viewBox="0 0 24 20" className="w-6 h-5" fill="none" stroke="#111" strokeWidth="3.500">
          <path d="M0 5h13M18 5h6M15 0v10M0 15h6M11 15h13M7 10v10" />
        </svg>
      </IconButton>
      <IconButton label="Microphone" className="w-[52px] text-[#3b62a8]">
        <Mic size={28} strokeWidth={2} />
      </IconButton>
      <IconButton label="Input method" className="w-[52px] text-[24px] font-['Noto_Sans_CJK_SC',sans-serif] leading-8">
        中
      </IconButton>
      <IconButton label="Network" className="w-[52px]">
        <Wifi size={28} />
      </IconButton>
      <IconButton label="Volume" className="w-[28px]">
        <Volume2 size={26} strokeWidth={1.5} />
      </IconButton>
      <IconButton label="Battery" className="w-[54px]">
        <svg viewBox="0 0 28 20" className="w-7 h-5" fill="none" stroke="currentColor" strokeWidth="2">
          <rect x="1" y="2" width="22" height="16" rx="3" />
          <path d="M5 6h8v8H5z" fill="currentColor" />
          <path d="M26 7v6" strokeWidth="3" />
        </svg>
      </IconButton>
      <IconButton label="Notifications" className="w-[54px]">
        <Bell size={26} strokeWidth={1.75} />
      </IconButton>
    </div>
  </footer>
);

/* video player logo and channel watermarks floating above the desktop */
const Watermarks = () => (
  <>
    <p className="absolute right-[380px] bottom-[40px] text-[49px] leading-[60px] font-bold text-white/80 whitespace-nowrap">
      尚硅谷
    </p>
    <p className="absolute right-[165px] bottom-[36px] font-['Lato',sans-serif] text-[73px] leading-[80px] font-bold italic text-[#f2f2f2]/70 [text-shadow:0_0_2px_#ccc] whitespace-nowrap">
      bilibili
    </p>
    <svg
      viewBox="0 0 110 106"
      className="absolute right-[57px] bottom-[120px] w-[110px] h-[106px] drop-shadow-[0_2px_2px_rgba(0,0,0,0.25)]"
    >
      <path
        fill="#fff"
        fillOpacity="0.8"
        fillRule="evenodd"
        d="M28 3c3-2 6-1 8 1l11 12c5-.3 10-.3 15 0L71 4c2-3 5-3 8-1s3 6 1 8l-4 5c8 0 14 0 17 1 9 3 13 9 14 17 2 14 2 35 0 49-1 12-8 19-19 20-22 2-45 2-67 0C9 102 3 95 2 83 0 69 0 48 2 34c1-9 7-15 16-17 5-1 11-1 17-1l-7-8c-2-2-1-4 0-5zM37 49c0-6 5-9 10-6l24 14c5 3 5 8 0 11L47 81c-5 3-9 1-10-4-1-9-1-19 0-28z"
      />
    </svg>
  </>
);

const App = () => {
  return (
    <div className="relative h-screen flex overflow-hidden bg-black font-['Noto_Sans','Noto_Sans_CJK_SC',sans-serif]">
      <div className="flex-1 min-w-0 min-h-0 flex flex-col ml-[123px] mr-[117px]">
        <Ribbon />
        <main className="flex-1 min-h-0 flex">
          <div className="flex-1 min-w-0 min-h-0 flex flex-col bg-[#e9e9e9] border-r-[3px] border-[#b0b0b0]">
            <div className="flex-1 min-h-0 flex pr-[3px]">
              <MapCanvas />
              <div className="w-[13px] shrink-0 border-x-[3px] border-[#f3f3f3] bg-[#dadada]" />
              <TopicNotes />
            </div>
            <DocumentTabs />
          </div>
          <TaskPanes />
        </main>
        <StatusBar />
        <Taskbar />
      </div>
      <Watermarks />
    </div>
  );
};

export default App;
